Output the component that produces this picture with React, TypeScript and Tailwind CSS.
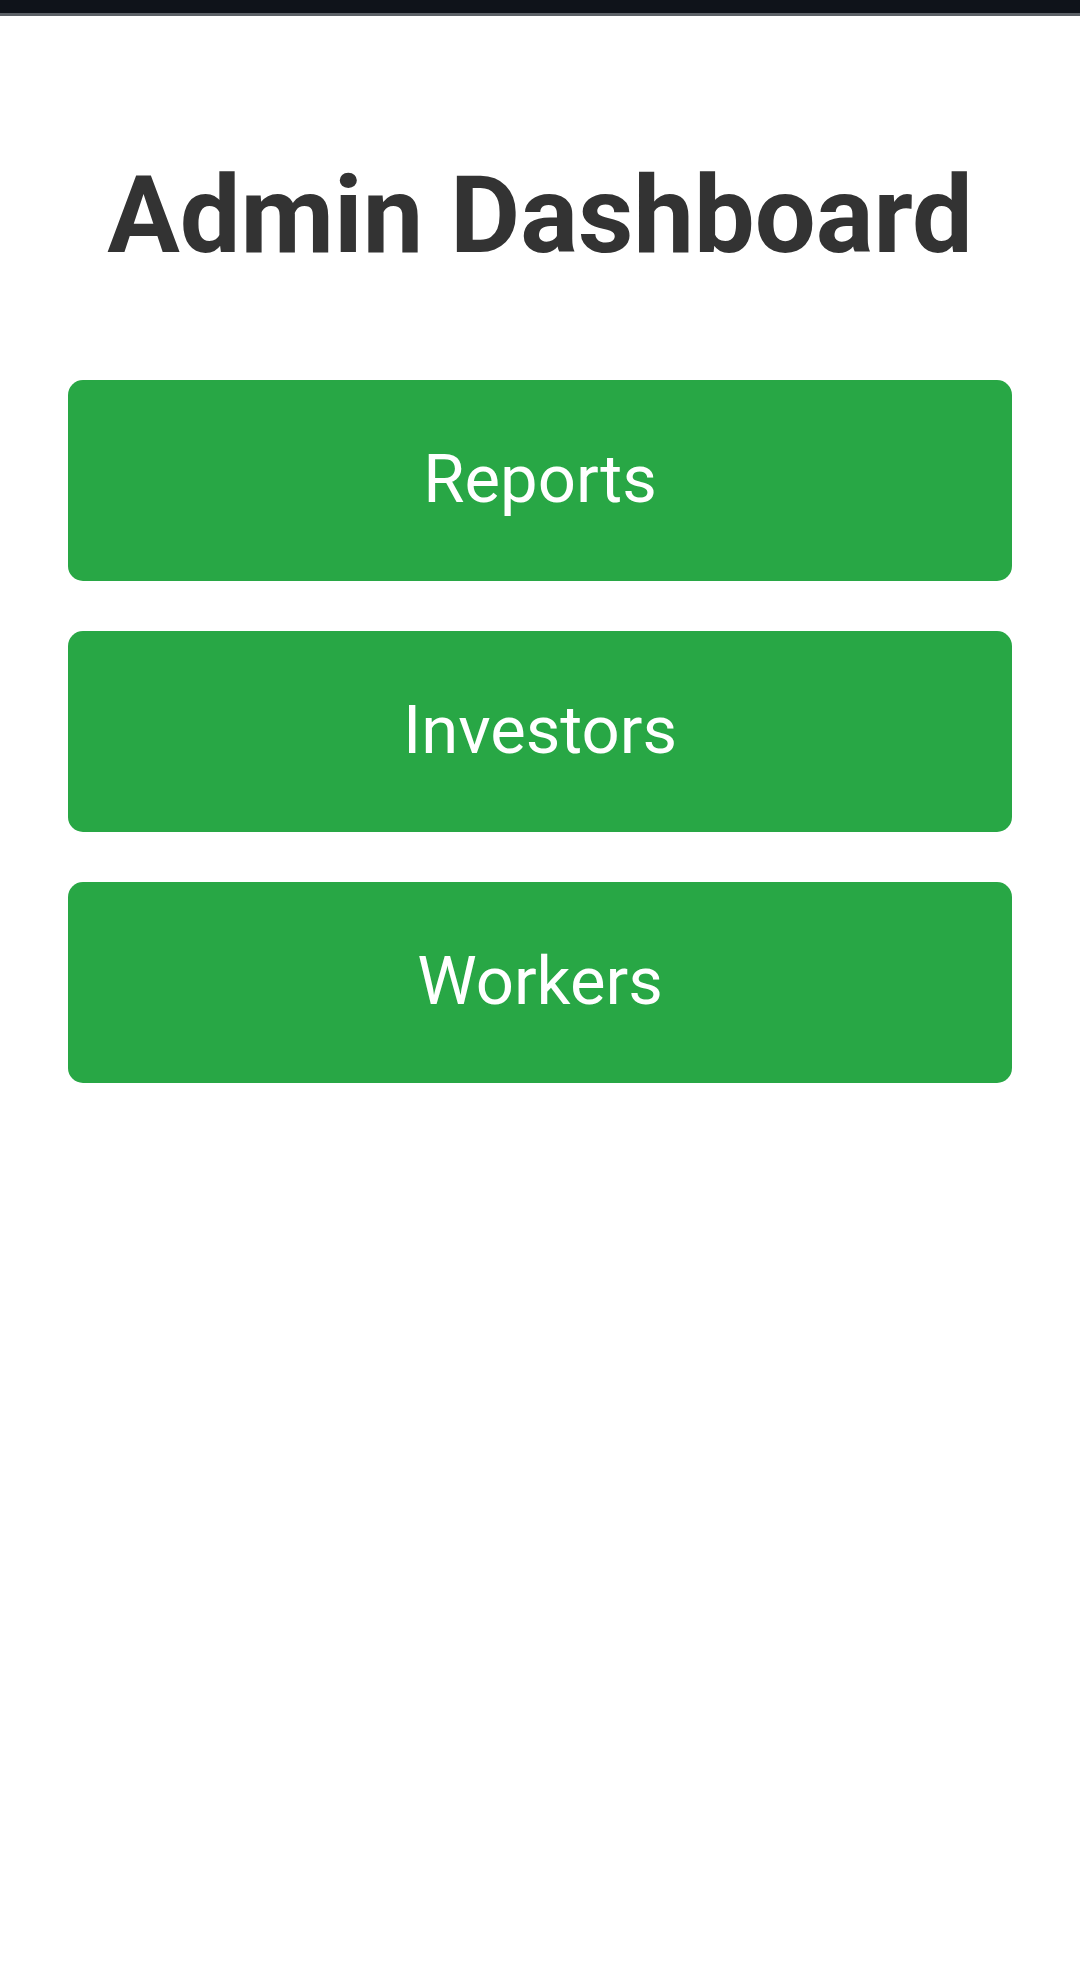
const items = ["Reports", "Investors", "Workers"];

const App = () => {
  return (
    <div className="min-h-[1983px] bg-white" style={{ fontFamily: "Roboto, 'Liberation Sans', sans-serif" }}>
      <div className="h-[13px] bg-[#0f131a]" />
      <div className="h-[3px] bg-[#5b6066]" />
      <h1 className="mt-[145px] text-center text-[108px] font-bold leading-none text-[#333333]">
        Admin Dashboard
      </h1>
      <div className="mt-[111px] flex flex-col gap-[50px] px-[68px]">
        {items.map((label) => (
          <button
            key={label}
            className="flex h-[201px] items-center justify-center rounded-[15px] bg-[#28a745] pb-[2px] text-[67px] leading-none text-white"
          >
            {label}
          </button>
        ))}
      </div>
    </div>
  );
};

export default App;
